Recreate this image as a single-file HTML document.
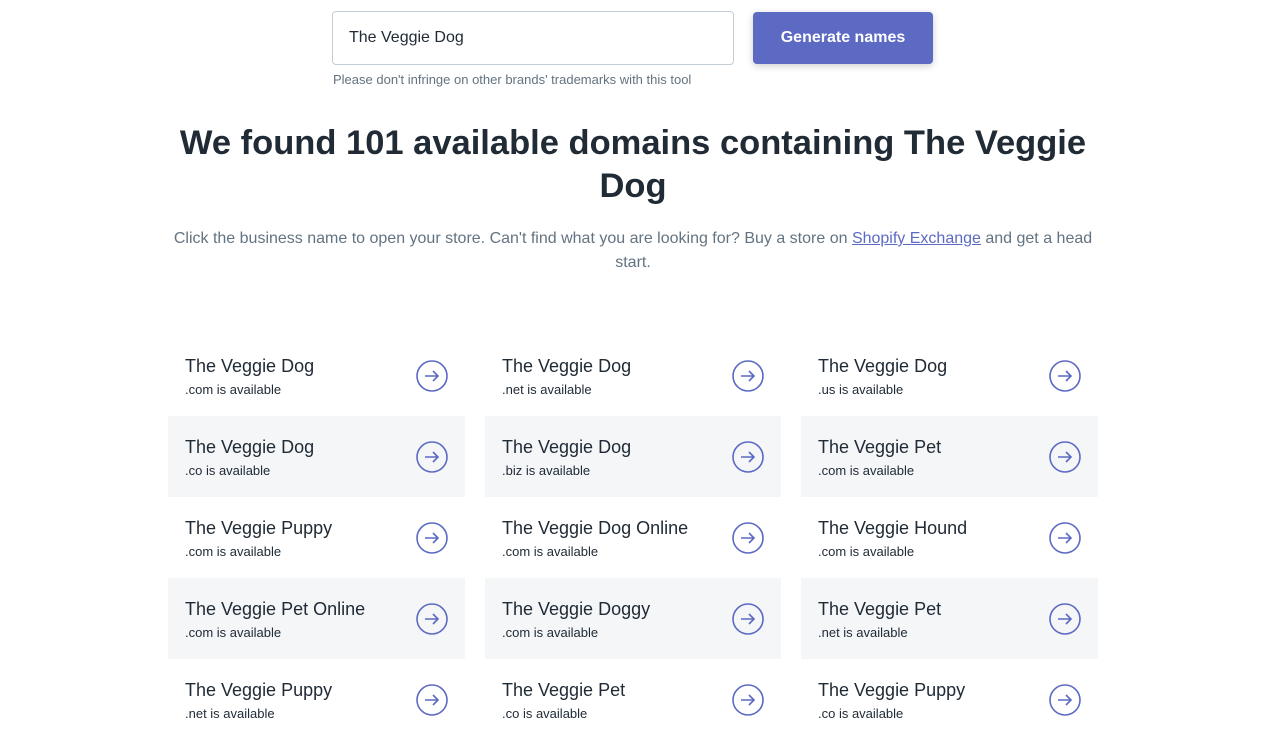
<!DOCTYPE html>
<html><head><style>
*{box-sizing:border-box;margin:0;padding:0}
body{width:1266px;height:695px;overflow:hidden;background:#fff;font-family:"Liberation Sans",sans-serif;color:#212b36;position:relative}
.input{position:absolute;left:332px;top:11px;width:402px;height:54px;border:1px solid #c4cdd5;border-radius:4px;font-size:16px;padding:17px 16px;color:#212b36}
.btn{position:absolute;left:753px;top:12px;width:180px;height:52px;background:#5c6ac4;border-radius:4px;color:#fff;font-weight:bold;font-size:16px;text-align:center;line-height:52px;box-shadow:0 2px 8px rgba(0,0,0,.2)}
.note{position:absolute;left:333px;top:72px;font-size:13px;color:#637381}
h1{position:absolute;left:100px;width:1066px;top:122px;text-align:center;font-size:34.5px;line-height:43px;font-weight:bold;color:#212b36}
p.d{position:absolute;left:163px;width:940px;top:227px;text-align:center;font-size:16px;line-height:24px;color:#637381}
p.d a{color:#5c6ac4}
.grid{position:absolute;left:168px;top:335px;display:grid;grid-template-columns:297px 296px 297px;column-gap:20px}
.c{height:81px;position:relative;padding:20px 17px}
.g{background:#f4f6f8}
.n{font-size:18px;line-height:22px;color:#212b36}
.s{font-size:13px;margin-top:5px;color:#212b36}
.c svg{position:absolute;right:17px;top:25px}
</style></head><body>
<div class="input">The Veggie Dog</div>
<div class="btn">Generate names</div>
<div class="note">Please don't infringe on other brands' trademarks with this tool</div>
<h1>We found 101 available domains containing The Veggie<br>Dog</h1>
<p class="d">Click the business name to open your store. Can't find what you are looking for? Buy a store on <a href="#">Shopify Exchange</a> and get a head start.</p>
<div class="grid">
<div class="c"><div class="n">The Veggie Dog</div><div class="s">.com is available</div><svg width="32" height="32"><circle cx="16" cy="16" r="15" fill="none" stroke="#5c6ac4" stroke-width="1.6"/><path d="M9 16h13M17 11l5 5-5 5" fill="none" stroke="#5c6ac4" stroke-width="1.6"/></svg></div>
<div class="c"><div class="n">The Veggie Dog</div><div class="s">.net is available</div><svg width="32" height="32"><circle cx="16" cy="16" r="15" fill="none" stroke="#5c6ac4" stroke-width="1.6"/><path d="M9 16h13M17 11l5 5-5 5" fill="none" stroke="#5c6ac4" stroke-width="1.6"/></svg></div>
<div class="c"><div class="n">The Veggie Dog</div><div class="s">.us is available</div><svg width="32" height="32"><circle cx="16" cy="16" r="15" fill="none" stroke="#5c6ac4" stroke-width="1.6"/><path d="M9 16h13M17 11l5 5-5 5" fill="none" stroke="#5c6ac4" stroke-width="1.6"/></svg></div>
<div class="c g"><div class="n">The Veggie Dog</div><div class="s">.co is available</div><svg width="32" height="32"><circle cx="16" cy="16" r="15" fill="none" stroke="#5c6ac4" stroke-width="1.6"/><path d="M9 16h13M17 11l5 5-5 5" fill="none" stroke="#5c6ac4" stroke-width="1.6"/></svg></div>
<div class="c g"><div class="n">The Veggie Dog</div><div class="s">.biz is available</div><svg width="32" height="32"><circle cx="16" cy="16" r="15" fill="none" stroke="#5c6ac4" stroke-width="1.6"/><path d="M9 16h13M17 11l5 5-5 5" fill="none" stroke="#5c6ac4" stroke-width="1.6"/></svg></div>
<div class="c g"><div class="n">The Veggie Pet</div><div class="s">.com is available</div><svg width="32" height="32"><circle cx="16" cy="16" r="15" fill="none" stroke="#5c6ac4" stroke-width="1.6"/><path d="M9 16h13M17 11l5 5-5 5" fill="none" stroke="#5c6ac4" stroke-width="1.6"/></svg></div>
<div class="c"><div class="n">The Veggie Puppy</div><div class="s">.com is available</div><svg width="32" height="32"><circle cx="16" cy="16" r="15" fill="none" stroke="#5c6ac4" stroke-width="1.6"/><path d="M9 16h13M17 11l5 5-5 5" fill="none" stroke="#5c6ac4" stroke-width="1.6"/></svg></div>
<div class="c"><div class="n">The Veggie Dog Online</div><div class="s">.com is available</div><svg width="32" height="32"><circle cx="16" cy="16" r="15" fill="none" stroke="#5c6ac4" stroke-width="1.6"/><path d="M9 16h13M17 11l5 5-5 5" fill="none" stroke="#5c6ac4" stroke-width="1.6"/></svg></div>
<div class="c"><div class="n">The Veggie Hound</div><div class="s">.com is available</div><svg width="32" height="32"><circle cx="16" cy="16" r="15" fill="none" stroke="#5c6ac4" stroke-width="1.6"/><path d="M9 16h13M17 11l5 5-5 5" fill="none" stroke="#5c6ac4" stroke-width="1.6"/></svg></div>
<div class="c g"><div class="n">The Veggie Pet Online</div><div class="s">.com is available</div><svg width="32" height="32"><circle cx="16" cy="16" r="15" fill="none" stroke="#5c6ac4" stroke-width="1.6"/><path d="M9 16h13M17 11l5 5-5 5" fill="none" stroke="#5c6ac4" stroke-width="1.6"/></svg></div>
<div class="c g"><div class="n">The Veggie Doggy</div><div class="s">.com is available</div><svg width="32" height="32"><circle cx="16" cy="16" r="15" fill="none" stroke="#5c6ac4" stroke-width="1.6"/><path d="M9 16h13M17 11l5 5-5 5" fill="none" stroke="#5c6ac4" stroke-width="1.6"/></svg></div>
<div class="c g"><div class="n">The Veggie Pet</div><div class="s">.net is available</div><svg width="32" height="32"><circle cx="16" cy="16" r="15" fill="none" stroke="#5c6ac4" stroke-width="1.6"/><path d="M9 16h13M17 11l5 5-5 5" fill="none" stroke="#5c6ac4" stroke-width="1.6"/></svg></div>
<div class="c"><div class="n">The Veggie Puppy</div><div class="s">.net is available</div><svg width="32" height="32"><circle cx="16" cy="16" r="15" fill="none" stroke="#5c6ac4" stroke-width="1.6"/><path d="M9 16h13M17 11l5 5-5 5" fill="none" stroke="#5c6ac4" stroke-width="1.6"/></svg></div>
<div class="c"><div class="n">The Veggie Pet</div><div class="s">.co is available</div><svg width="32" height="32"><circle cx="16" cy="16" r="15" fill="none" stroke="#5c6ac4" stroke-width="1.6"/><path d="M9 16h13M17 11l5 5-5 5" fill="none" stroke="#5c6ac4" stroke-width="1.6"/></svg></div>
<div class="c"><div class="n">The Veggie Puppy</div><div class="s">.co is available</div><svg width="32" height="32"><circle cx="16" cy="16" r="15" fill="none" stroke="#5c6ac4" stroke-width="1.6"/><path d="M9 16h13M17 11l5 5-5 5" fill="none" stroke="#5c6ac4" stroke-width="1.6"/></svg></div>
</div>
</body></html>
